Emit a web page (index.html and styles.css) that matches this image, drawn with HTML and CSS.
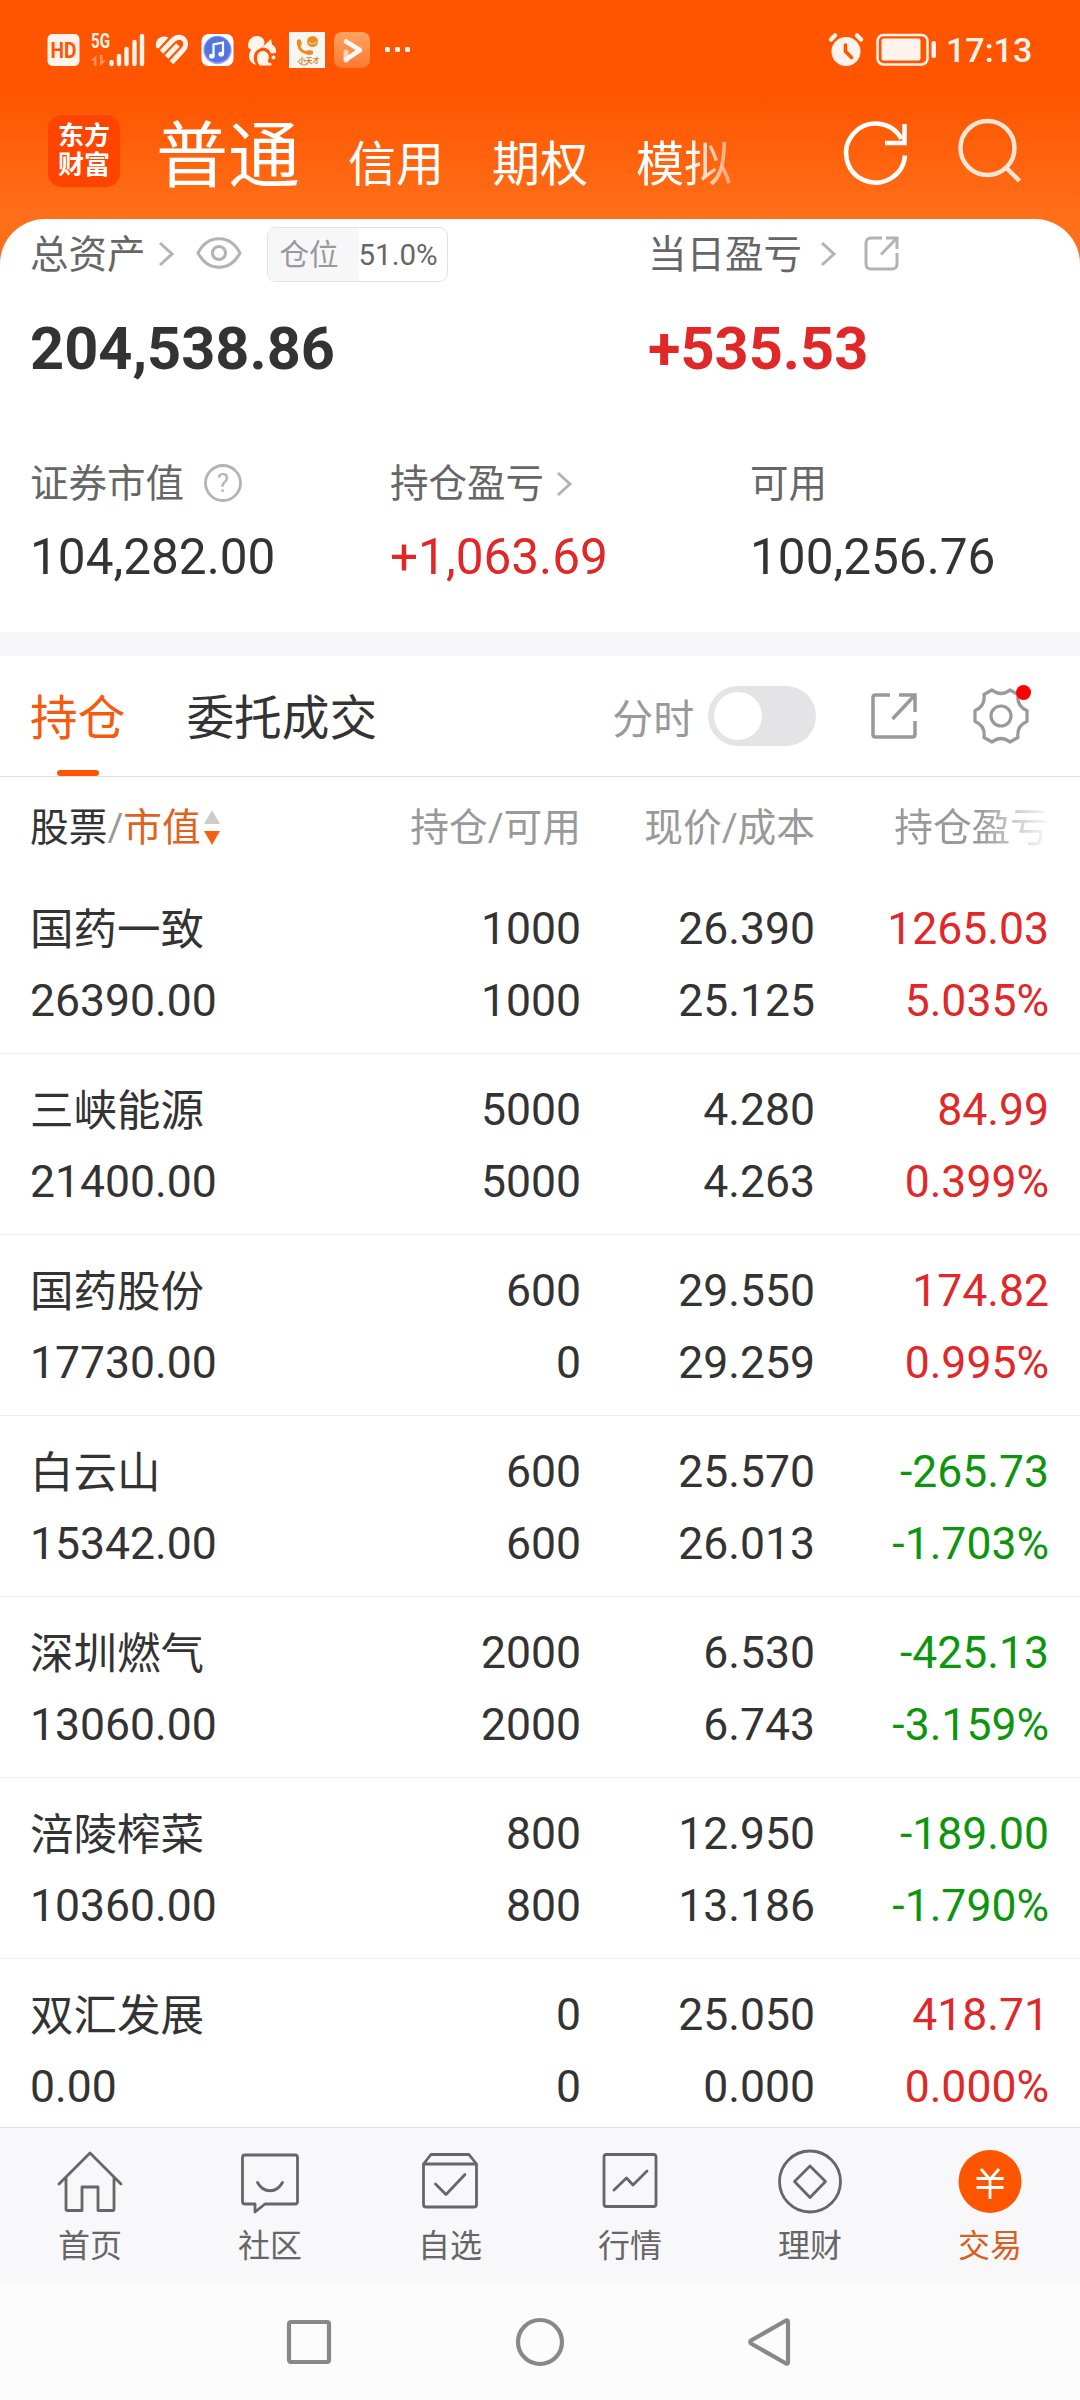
FILE: index.html
```html
<!doctype html>
<html lang="zh-CN">
<head>
    <meta charset="utf-8">
    <title>东方财富</title>
    <link rel="stylesheet" href="styles.css">
</head>

<body>
<div class="screen">
    <header class="header">
        <div class="status">
            <svg class="st-hd" width="33" height="36" viewBox="0 0 33 36">
                <rect x="0.5" y="2" width="32" height="32" rx="5" fill="#fff3eb"/>
                <text x="16.5" y="26" text-anchor="middle" textLength="26" lengthAdjust="spacingAndGlyphs" class="hd-text">HD</text>
            </svg>
            <svg class="st-signal" width="54" height="36" viewBox="0 0 54 36">
                <text x="0" y="16" textLength="19" lengthAdjust="spacingAndGlyphs" class="net-text">5G</text>
                <path d="M0 28.5l5.500-5.500V34H3V28.500zM9 23h2.500v5.500H15L9 34z" fill="#ff9359"/>
                <g stroke="#fff3eb" stroke-width="4.4" stroke-linecap="round">
                    <path d="M20.5 30v2M28 24v8M35.5 17v15M43.5 10v22M51 4v28"/>
                </g>
            </svg>
            <svg class="st-heart" width="34" height="36" viewBox="0 0 34 36">
                <path d="M1 14.500C-0.500 7 7 2.500 13.500 5.500L3.500 16.500C2 16.500 1.300 15.500 1 14.500z" fill="#fff3eb"/>
                <path d="M6.500 20L17.500 8.500C22 4 26.500 4.500 29 7.500c2.500 3 2 7.500-1 10.500L16.500 30.500M11.500 25L23 13" fill="none" stroke="#fff3eb" stroke-width="5"/>
            </svg>
            <svg class="st-music" width="33" height="36" viewBox="0 0 33 36">
                <rect x="0.500" y="2" width="32" height="32" rx="7" fill="#fff"/>
                <circle cx="16.500" cy="18" r="14.200" fill="#b69cf5"/>
                <circle cx="16.500" cy="17.500" r="13" fill="#4f78de"/>
                <path d="M12.500 24V12.500l9.500-2V22" fill="none" stroke="#fff" stroke-width="2.200"/>
                <ellipse cx="10.800" cy="24.200" rx="2.800" ry="2.400" fill="#fff"/>
                <ellipse cx="20.200" cy="22.200" rx="2.800" ry="2.400" fill="#fff"/>
            </svg>
            <svg class="st-squirrel" width="31" height="36" viewBox="0 0 31 36">
                <path d="M1 14C1 7 6 4 10 4c5 0 8 4 7.500 7-0.500 4-4 5-7 7-3.500 2.500-4 6-3.500 10 0.500 2.500 1.500 4 2.500 5C4.500 32 2 28 2 24c0-3.500 2-5.500 2-7C2.500 17 1 16 1 14z" fill="#fff3eb"/>
                <path d="M24 7l1 5.500c3.500 2 4.500 5 4 8.500l-5 0.500c-1.500-4.500-5.500-6.500-9.500-5.500z" fill="#fff3eb"/>
                <path d="M10 26c0-5 4-8 8-6.500 4 1.500 5 6 2.500 10.500l4 1.500v2H13c-2-2-3-4-3-7.500z" fill="#fff3eb"/>
                <circle cx="26.500" cy="25.500" r="2" fill="#fff3eb"/>
            </svg>
            <svg class="st-box" width="36" height="36" viewBox="0 0 36 36">
                <rect width="36" height="36" fill="#f8f6f3"/>
                <path d="M10 9c-1 7 2 12 11 12" fill="none" stroke="#ec8d1c" stroke-width="3"/>
                <path d="M10 9.500l0.500 2.500M19 20.500h3" stroke="#ec8d1c" stroke-width="4.500" stroke-linecap="round"/>
                <circle cx="23.500" cy="9.500" r="5.500" fill="#ec8d1c"/>
                <path d="M19 9.500c2 3 7 3 9 0" fill="none" stroke="#fbe6cc" stroke-width="1"/>
                <path d="M8.500 29c3 4 7 5 10 3" fill="none" stroke="#d0851f" stroke-width="1"/>
                <text x="20" y="31" text-anchor="middle" class="box-text">小天才</text>
            </svg>
            <svg class="st-play" width="36" height="36" viewBox="0 0 36 36">
                <defs>
                    <linearGradient id="play-bg" x1="0" y1="0" x2="0" y2="1">
                        <stop offset="0" stop-color="#ffa35f"/>
                        <stop offset="1" stop-color="#ff7930"/>
                    </linearGradient>
                </defs>
                <rect width="36" height="36" rx="8" fill="url(#play-bg)"/>
                <path d="M12 20v8" stroke="#ffd3b3" stroke-width="5" stroke-linecap="round"/>
                <path d="M12 9.500L26 18 12 27.500" fill="none" stroke="#fff8f2" stroke-width="4.600" stroke-linecap="round" stroke-linejoin="round"/>
            </svg>
            <svg class="st-dots" width="28" height="36" viewBox="0 0 28 36">
                <g fill="#fff3eb">
                    <rect x="0" y="15" width="5" height="5" rx="1.500"/>
                    <rect x="10" y="15" width="5" height="5" rx="1.500"/>
                    <rect x="20" y="15" width="5" height="5" rx="1.500"/>
                </g>
            </svg>
            <svg class="st-alarm" width="36" height="36" viewBox="0 0 36 36">
                <circle cx="18" cy="19.500" r="14.500" fill="#fff3eb"/>
                <path d="M3 7.500L7 3.500M33 7.500L29 3.500" stroke="#fff3eb" stroke-width="4.500" stroke-linecap="round"/>
                <path d="M17.500 13v6.500l6 6" fill="none" stroke="#ff5500" stroke-width="3.600" stroke-linecap="round"/>
            </svg>
            <svg class="st-battery" width="61" height="36" viewBox="0 0 61 36">
                <rect x="1.500" y="3" width="50" height="29.500" rx="6" fill="none" stroke="#fff3eb" stroke-width="2.500"/>
                <rect x="5.500" y="6.500" width="39" height="22" rx="2" fill="#fff3eb"/>
                <rect x="55.500" y="9" width="4.500" height="17" rx="2" fill="#fff3eb"/>
            </svg>
            <span class="clock">17:13</span>
        </div>

        <div class="topbar">
            <div class="logo"><span>东方</span><span>财富</span></div>
            <nav class="accounts">
                <span class="account current">普通</span>
                <span class="account">信用</span>
                <span class="account">期权</span>
                <span class="account fading">模拟</span>
            </nav>
            <svg class="refresh" width="66" height="66" viewBox="0 0 66 66" fill="none" stroke="#fff" stroke-width="4.500">
                <path d="M62 35.500A29.500 29.500 0 1 1 58.500 19"/>
                <path d="M61.500 4v19H42"/>
            </svg>
            <svg class="search" width="66" height="66" viewBox="0 0 66 66" fill="none" stroke="#ffe5d3" stroke-width="4.500">
                <circle cx="30.500" cy="29" r="27"/>
                <path d="M49 48.500l13.500 13.500"/>
            </svg>
        </div>
    </header>

    <section class="summary">
        <div class="totals">
            <div class="total">
                <div class="caption">
                    <span class="label">总资产</span>
                    <svg class="chevron near" width="16" height="28" viewBox="0 0 16 28"><path d="M2 3l12 11L2 25"/></svg>
                    <svg class="eye" width="46" height="32" viewBox="0 0 46 32" fill="none" stroke="#b3b3b3" stroke-width="3">
                        <path d="M2 16C12-3 34-3 44 16 34 35 12 35 2 16z"/>
                        <circle cx="23" cy="16" r="6.500"/>
                    </svg>
                    <span class="ratio"><span class="ratio-name">仓位</span><span class="ratio-value">51.0%</span></span>
                </div>
                <div class="big">204,538.86</div>
            </div>
            <div class="total">
                <div class="caption">
                    <span class="label">当日盈亏</span>
                    <svg class="chevron far" width="16" height="28" viewBox="0 0 16 28"><path d="M2 3l12 11L2 25"/></svg>
                    <svg class="share" width="36" height="36" viewBox="0 0 36 36" fill="none" stroke="#b3b3b3" stroke-width="3">
                        <path d="M18 2H7C4 2 2 4 2 7v21c0 3 2 5 5 5h21c3 0 5-2 5-5V17"/>
                        <path d="M22 2h11v11M33 2L17 18.500"/>
                    </svg>
                </div>
                <div class="big up">+535.53</div>
            </div>
        </div>
        <div class="details">
            <div class="detail">
                <div class="caption">
                    <span class="label">证券市值</span>
                    <svg class="help" width="40" height="40" viewBox="0 0 40 40">
                        <circle cx="20" cy="20" r="17.500" fill="none" stroke="#b3b3b3" stroke-width="2.800"/>
                        <text x="20" y="29" text-anchor="middle" class="help-text">?</text>
                    </svg>
                </div>
                <div class="amount">104,282.00</div>
            </div>
            <div class="detail">
                <div class="caption">
                    <span class="label">持仓盈亏</span>
                    <svg class="chevron near" width="16" height="28" viewBox="0 0 16 28"><path d="M2 3l12 11L2 25"/></svg>
                </div>
                <div class="amount up">+1,063.69</div>
            </div>
            <div class="detail">
                <div class="caption"><span class="label">可用</span></div>
                <div class="amount">100,256.76</div>
            </div>
        </div>
    </section>

    <div class="band"></div>

    <div class="tabs">
        <span class="tab active">持仓</span>
        <span class="tab">委托成交</span>
        <span class="minute">分时</span>
        <span class="toggle"></span>
        <svg class="export" width="48" height="48" viewBox="0 0 48 48" fill="none" stroke="#999" stroke-width="3.500">
            <path d="M20 3H5.500C4 3 3 4 3 5.500v37C3 44 4 45 5.500 45h37c1.500 0 2.500-1 2.500-2.500V29"/>
            <path d="M29 3h16v17M45 3L22.500 27"/>
        </svg>
        <span class="settings">
            <svg width="58" height="58" viewBox="-29 -29 58 58" fill="none" stroke="#999" stroke-width="3.200" stroke-linejoin="round">
                <path d="M-9-26Q0-19 9-26L17-21.500Q15.500-9.500 26-5.500V5.500Q15.500 9.500 17 21.500L9 26Q0 19-9 26L-17 21.500Q-15.500 9.500-26 5.500V-5.500Q-15.500-9.500-17-21.500Z"/>
                <circle r="10"/>
            </svg>
            <i class="dot"></i>
        </span>
    </div>

    <div class="row thead">
        <div class="name-head">
            <span class="stock">股票</span><span>/</span><span class="sorted">市值</span>
            <svg class="sort" width="18" height="36" viewBox="0 0 18 36">
                <path d="M9 1l8 14H1z" fill="#ccc"/>
                <path d="M9 36l8-14H1z" fill="#f76014"/>
            </svg>
        </div>
        <div class="num">持仓/可用</div>
        <div class="num">现价/成本</div>
        <div class="num fade-out">持仓盈亏</div>
    </div>

    <main class="list">
        <div class="row">
            <div><b>国药一致</b><p>26390.00</p></div>
            <div class="num"><p>1000</p><p>1000</p></div>
            <div class="num"><p>26.390</p><p>25.125</p></div>
            <div class="num up"><p>1265.03</p><p>5.035%</p></div>
        </div>
        <div class="row">
            <div><b>三峡能源</b><p>21400.00</p></div>
            <div class="num"><p>5000</p><p>5000</p></div>
            <div class="num"><p>4.280</p><p>4.263</p></div>
            <div class="num up"><p>84.99</p><p>0.399%</p></div>
        </div>
        <div class="row">
            <div><b>国药股份</b><p>17730.00</p></div>
            <div class="num"><p>600</p><p>0</p></div>
            <div class="num"><p>29.550</p><p>29.259</p></div>
            <div class="num up"><p>174.82</p><p>0.995%</p></div>
        </div>
        <div class="row">
            <div><b>白云山</b><p>15342.00</p></div>
            <div class="num"><p>600</p><p>600</p></div>
            <div class="num"><p>25.570</p><p>26.013</p></div>
            <div class="num down"><p>-265.73</p><p>-1.703%</p></div>
        </div>
        <div class="row">
            <div><b>深圳燃气</b><p>13060.00</p></div>
            <div class="num"><p>2000</p><p>2000</p></div>
            <div class="num"><p>6.530</p><p>6.743</p></div>
            <div class="num down"><p>-425.13</p><p>-3.159%</p></div>
        </div>
        <div class="row">
            <div><b>涪陵榨菜</b><p>10360.00</p></div>
            <div class="num"><p>800</p><p>800</p></div>
            <div class="num"><p>12.950</p><p>13.186</p></div>
            <div class="num down"><p>-189.00</p><p>-1.790%</p></div>
        </div>
        <div class="row">
            <div><b>双汇发展</b><p>0.00</p></div>
            <div class="num"><p>0</p><p>0</p></div>
            <div class="num"><p>25.050</p><p>0.000</p></div>
            <div class="num up"><p>418.71</p><p>0.000%</p></div>
        </div>
    </main>

    <nav class="bottom">
        <div class="item">
            <svg width="70" height="70" viewBox="0 0 70 70">
                <path d="M4 36L35 5l31 31M11 30v31c0 1 0.500 1.500 1.500 1.500H27V39h16v23.500h14.500c1 0 1.500-0.500 1.500-1.500V30"/>
            </svg>
            <span>首页</span>
        </div>
        <div class="item">
            <svg width="70" height="70" viewBox="0 0 70 70">
                <path d="M10 7h50c1.500 0 2.500 1 2.500 2.500v44c0 1.500-1 2.500-2.500 2.500H30l-10 8v-8H10c-1.500 0-2.500-1-2.500-2.500v-44C7.500 8 8.500 7 10 7z"/>
                <path d="M22.500 34.500c6 11 19 11 25 0"/>
            </svg>
            <span>社区</span>
        </div>
        <div class="item">
            <svg width="70" height="70" viewBox="0 0 70 70">
                <path d="M8.500 16l7.500-9.500h38l7.500 9.500v40.500c0 1.500-1 2.500-2.500 2.500H11c-1.500 0-2.500-1-2.500-2.500zM8.500 16h53"/>
                <path d="M20.500 36L31 46.500l19-20"/>
            </svg>
            <span>自选</span>
        </div>
        <div class="item">
            <svg width="70" height="70" viewBox="0 0 70 70">
                <rect x="9" y="6.500" width="52" height="52" rx="2.500"/>
                <path d="M19 42l12.500-12L38 37l14-14"/>
            </svg>
            <span>行情</span>
        </div>
        <div class="item">
            <svg width="70" height="70" viewBox="0 0 70 70">
                <circle cx="35" cy="33.500" r="30.500"/>
                <path d="M35 18l15.500 15.500L35 49.500 19.500 33.500z"/>
            </svg>
            <span>理财</span>
        </div>
        <div class="item on">
            <svg width="70" height="70" viewBox="0 0 70 70">
                <circle class="disc" cx="35" cy="33.500" r="31.500"/>
                <path class="yen" d="M26 21l9 10.500L44 21M35 31v20M21.500 30.500h27M21.500 39.500h27"/>
            </svg>
            <span>交易</span>
        </div>
    </nav>

    <div class="sysnav">
        <svg width="50" height="50" viewBox="0 0 50 50"><rect x="5" y="5" width="40" height="40" rx="2"/></svg>
        <svg width="50" height="50" viewBox="0 0 50 50"><circle cx="25" cy="25" r="22"/></svg>
        <svg width="50" height="50" viewBox="0 0 50 50"><path d="M42 5v40c0 1.500-1 2-2 1.500L5 26.500c-1-0.700-1-2.300 0-3L40 3.500c1-0.500 2 0 2 1.500z"/></svg>
    </div>
</div>
</body>
</html>
```

FILE: styles.css
```css
* {
    box-sizing: border-box;
}
body {
    margin: 0;
    background: #fff;
    color: #333;
    font-family: Roboto, "Noto Sans CJK SC", sans-serif;
}
p {
    margin: 0;
}
svg {
    display: block;
    flex: none;
    overflow: visible;
}

.screen {
    width: 1080px;
    height: 2400px;
    overflow: hidden;
    display: flex;
    flex-direction: column;
}
.up {
    color: #e02828;
}
.down {
    color: #0d960d;
}

/* header */
.header {
    flex: none;
    height: 269px;
    background: linear-gradient(#ff5500 95px, #ff6f19 215px);
}
.status {
    display: flex;
    height: 72px;
    padding: 32px 0 0 47px;
}
.st-signal { margin-left: 11px; }
.st-heart { margin-left: 10px; }
.st-music { margin-left: 12px; }
.st-squirrel { margin-left: 13px; }
.st-box { margin-left: 11px; }
.st-play { margin-left: 9px; }
.st-dots { margin-left: 15px; }
.st-alarm { margin-left: 415px; }
.st-battery { margin-left: 12px; }
.hd-text {
    font: 700 22px Roboto, sans-serif;
    fill: #ff5500;
}
.net-text {
    font: 700 20px Roboto, sans-serif;
    fill: #fff3eb;
}
.box-text {
    font: 700 7px "Noto Sans CJK SC", sans-serif;
    fill: #d0851f;
}
.clock {
    margin-left: 9px;
    color: #fff3eb;
    font-size: 34px;
    font-weight: 500;
    line-height: 36px;
}
.topbar {
    display: flex;
    padding-left: 48px;
    height: 125px;
}
.logo {
    width: 72px;
    height: 72px;
    margin-top: 43px;
    padding-top: 7px;
    border-radius: 14px;
    background: #ff4400;
    color: #fff;
    font-size: 26px;
    font-weight: 700;
    line-height: 29px;
    text-align: center;
}
.logo span {
    display: block;
    height: 29px;
}
.accounts {
    display: flex;
    align-items: baseline;
    gap: 48px;
    width: 640px;
    padding: 5px 0 0 36px;
    color: #fff;
    line-height: 160px;
}
.account {
    font-size: 48px;
}
.current {
    font-size: 72px;
}
.fading {
    -webkit-mask-image: linear-gradient(90deg, #000 55%, rgba(0, 0, 0, 0.4) 100%);
    mask-image: linear-gradient(90deg, #000 55%, rgba(0, 0, 0, 0.4) 100%);
}
.refresh {
    margin: 48px 0 0 83px;
}
.search {
    margin: 47px 0 0 48px;
}

/* summary card */
.summary {
    flex: none;
    height: 413px;
    margin-top: -50px;
    padding-left: 30px;
    border-radius: 45px 45px 0 0;
    background: #fff;
}
.totals {
    display: grid;
    grid-template-columns: 618px 1fr;
    padding-top: 7px;
}
.caption {
    display: flex;
    align-items: center;
    height: 56px;
    color: #666;
    font-size: 38.500px;
}
.label {
    padding-bottom: 6px;
}
.chevron {
    fill: none;
    stroke: #b3b3b3;
    stroke-width: 3;
}
.near {
    margin-left: 12px;
}
.far {
    margin-left: 18px;
}
.eye {
    margin-left: 22px;
    margin-bottom: 2px;
}
.ratio {
    display: flex;
    width: 181px;
    height: 55px;
    margin-left: 25px;
    border: 1px solid #e2e2e6;
    border-radius: 9px;
    overflow: hidden;
    font-size: 29.500px;
    line-height: 54px;
}
.ratio-name {
    width: 91px;
    padding-left: 12px;
    background: #f7f7fa;
    color: #999;
}
.share {
    margin-left: 28px;
}
.big {
    margin-top: 27px;
    font-size: 59.500px;
    font-weight: 700;
    line-height: 80px;
}
.details {
    display: grid;
    grid-template-columns: 360px 360px 1fr;
    padding-top: 66px;
}
.details .caption {
    height: 58px;
}
.details .label {
    padding-bottom: 8px;
}
.help {
    margin-left: 19px;
    margin-bottom: 2px;
}
.help-text {
    font: 26px Roboto, sans-serif;
    fill: #b3b3b3;
}
.amount {
    margin-top: 14px;
    font-size: 49.500px;
    line-height: 60px;
}
.band {
    flex: none;
    height: 24px;
    background: #f7f7fa;
}

/* tabs */
.tabs {
    flex: none;
    display: flex;
    align-items: center;
    height: 121px;
    padding-left: 30px;
    border-bottom: 1px solid #ddd;
    font-size: 47.700px;
}
.tab {
    height: 120px;
    margin-right: 61px;
    line-height: 126px;
}
.active {
    color: #f55a0f;
}
.active::after {
    content: "";
    display: block;
    width: 42px;
    height: 6px;
    margin: -12px auto 0;
    border-radius: 3px;
    background: #ff5500;
}
.minute {
    width: 96px;
    margin-left: 174px;
    padding-bottom: 1px;
    color: #999;
    font-size: 41px;
}
.toggle {
    width: 108px;
    height: 60px;
    padding: 6px;
    border-radius: 30px;
    background: #e4e4e6;
}
.toggle::before {
    content: "";
    display: block;
    width: 48px;
    height: 48px;
    border-radius: 50%;
    background: #fff;
}
.export {
    margin-left: 54px;
}
.settings {
    position: relative;
    margin-left: 54px;
}
.dot {
    position: absolute;
    top: -2px;
    right: -1px;
    width: 15px;
    height: 15px;
    border-radius: 50%;
    background: #f00;
}

/* holdings */
.row {
    display: grid;
    grid-template-columns: 321px 230px 234px 234px;
    height: 181px;
    padding: 20px 31px 0 30px;
    border-bottom: 1px solid #eee;
    font-size: 44.500px;
    line-height: 72px;
}
.row b {
    display: block;
    height: 72px;
    font-size: 43.500px;
    font-weight: 400;
    line-height: 75px;
}
.num {
    text-align: right;
}
.thead {
    flex: none;
    height: 96px;
    padding-top: 0;
    border-bottom: 0;
    color: #999;
    font-size: 38.700px;
    line-height: 101px;
}
.name-head {
    display: flex;
}
.stock {
    color: #333;
}
.sorted {
    color: #e0621c;
}
.sort {
    margin: 32px 0 0 2px;
}
.fade-out {
    -webkit-mask-image: linear-gradient(90deg, #000 70%, rgba(0, 0, 0, 0.05) 100%);
    mask-image: linear-gradient(90deg, #000 70%, rgba(0, 0, 0, 0.05) 100%);
}
.list {
    flex: none;
    height: 1254px;
    overflow: hidden;
}

/* bottom navigation */
.bottom {
    flex: none;
    display: grid;
    grid-template-columns: repeat(6, 1fr);
    height: 157px;
    border-top: 1px solid #e0e0e4;
    background: #f8f8fa;
}
.item {
    display: flex;
    flex-direction: column;
    align-items: center;
    padding-top: 20px;
    color: #666;
    font-size: 32px;
    line-height: 56px;
}
.item svg {
    fill: none;
    stroke: #666;
    stroke-width: 2.800;
    stroke-linecap: round;
    stroke-linejoin: round;
}
.on {
    color: #d95f1e;
}
.item .disc {
    fill: #ff5500;
    stroke: none;
}
.item .yen {
    stroke: #fff;
    stroke-linecap: butt;
}
.sysnav {
    flex: none;
    display: flex;
    justify-content: center;
    gap: 181px;
    height: 116px;
    padding-top: 33px;
    background: #fcfcfc;
}
.sysnav svg {
    fill: none;
    stroke: #888;
    stroke-width: 4.200;
}
```
